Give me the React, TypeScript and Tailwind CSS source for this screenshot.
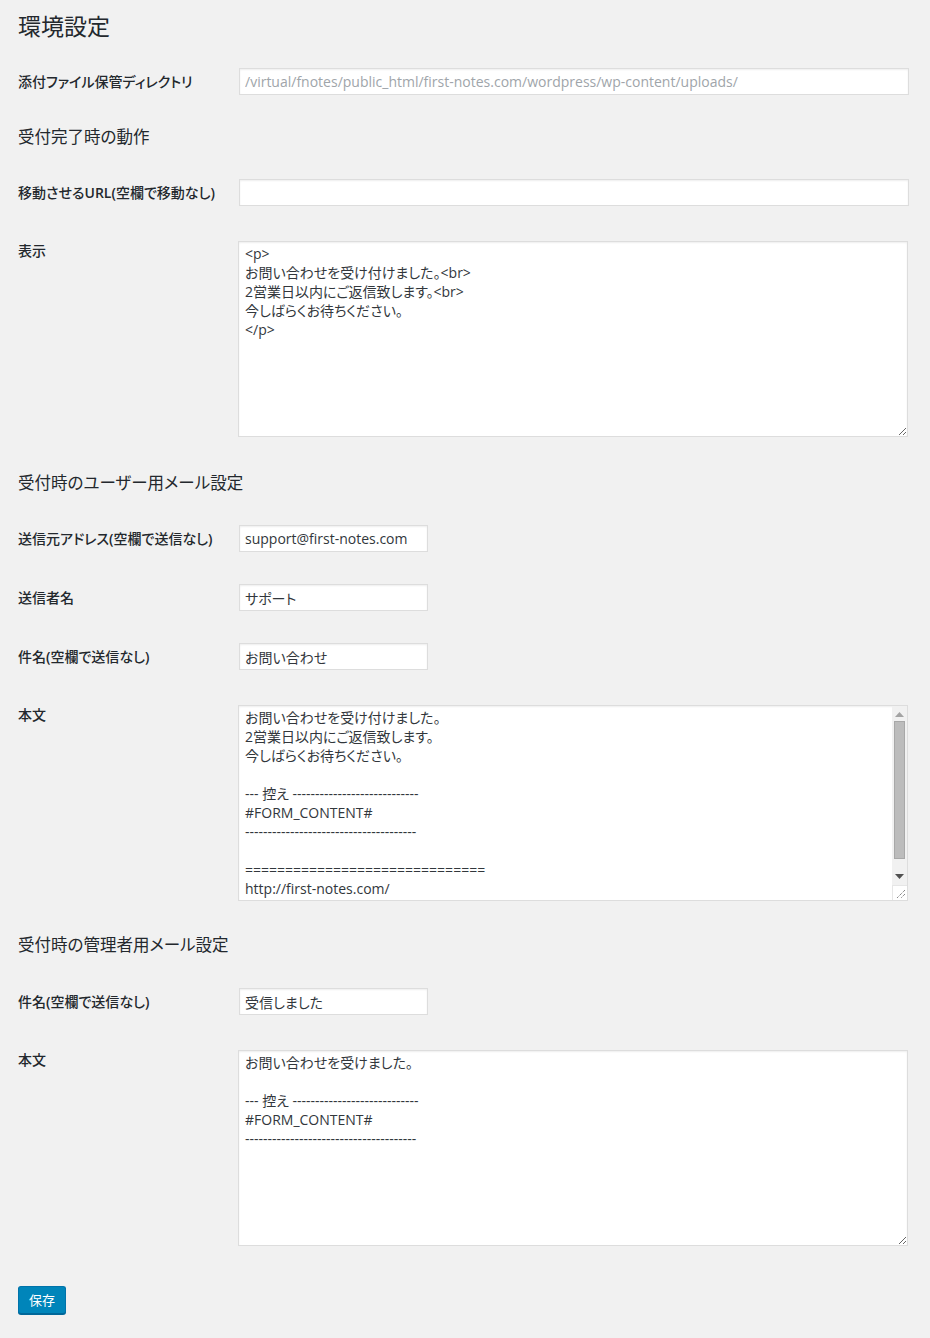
import React from "react";

const userBody = `お問い合わせを受け付けました。
2営業日以内にご返信致します。
今しばらくお待ちください。

--- 控え ----------------------------
#FORM_CONTENT#
--------------------------------------

==============================
http://first-notes.com/
==============================`;

const adminBody = `お問い合わせを受けました。

--- 控え ----------------------------
#FORM_CONTENT#
--------------------------------------`;

const displayBody = `<p>
お問い合わせを受け付けました。<br>
2営業日以内にご返信致します。<br>
今しばらくお待ちください。
</p>`;

function TextInput({ value, wide, muted }: { value: string; wide?: boolean; muted?: boolean }) {
  return (
    <input
      type="text"
      defaultValue={value}
      readOnly={muted}
      className={
        (wide ? "w-[670px] " : "w-[189px] ") +
        (muted ? "text-[#a0a5aa] " : "text-[#32373c] ") +
        "h-[27px] border border-[#dddddd] bg-white px-[5px] text-[14px] [font-feature-settings:'palt'] shadow-[inset_0_1px_2px_rgba(0,0,0,0.07)] outline-none"
      }
    />
  );
}

function Row({ label, children, top }: { label: React.ReactNode; children: React.ReactNode; top?: boolean }) {
  return (
    <div className={"flex " + (top ? "items-start" : "items-center")}>
      <div className="w-[221px] shrink-0 text-[14px] leading-[19px] font-medium text-[#23282d]">{label}</div>
      {children}
    </div>
  );
}

// latin parts of a label are semibold in the original
function B({ children }: { children: React.ReactNode }) {
  return <span className="font-semibold">{children}</span>;
}

function Area({ value }: { value: string }) {
  return (
    <textarea
      defaultValue={value}
      className="-ml-px h-[196px] w-[670px] resize border border-[#dddddd] bg-white px-[6px] pt-[2px] text-[14px] leading-[19px] text-[#32373c] [font-feature-settings:'palt'] shadow-[inset_0_1px_2px_rgba(0,0,0,0.07)] outline-none"
    />
  );
}

// textarea whose content overflows: scrollbar is drawn by hand over it
function ScrollArea({ value }: { value: string }) {
  return (
    <div className="relative -ml-px h-[196px] w-[670px]">
      <textarea
        defaultValue={value}
        className="h-full w-full resize-none overflow-hidden border border-[#dddddd] bg-white pl-[6px] pr-[20px] pt-[2px] text-[14px] leading-[19px] text-[#32373c] [font-feature-settings:'palt'] shadow-[inset_0_1px_2px_rgba(0,0,0,0.07)] outline-none"
      />
      <div className="absolute right-px top-px bottom-[16px] flex w-[15px] flex-col items-center bg-[#f1f1f1]">
        <svg width="9" height="5" viewBox="0 0 9 5" className="mt-[6px]">
          <path d="M4.5 0 L9 5 L0 5 Z" fill="#a3a3a3" />
        </svg>
        <div className="mt-[4px] h-[138px] w-[11px] border border-[#a8a8a8] bg-[#bcbcbc]" />
        <div className="flex-1" />
        <svg width="9" height="5" viewBox="0 0 9 5" className="mb-[6px]">
          <path d="M0 0 L9 0 L4.5 5 Z" fill="#505050" />
        </svg>
      </div>
      <div className="absolute right-px bottom-px h-[15px] w-[15px] border-l border-t border-[#e6e6e6] bg-white">
        <svg width="14" height="14" viewBox="0 0 14 14" className="block">
          <path d="M12 4 L4 12 M12 8 L8 12" stroke="#555" strokeWidth="1" strokeDasharray="1 1" />
        </svg>
      </div>
    </div>
  );
}

function Heading({ children, className }: { children: React.ReactNode; className: string }) {
  return <h2 className={"text-[16.5px] leading-[24px] text-[#23282d] " + className}>{children}</h2>;
}

export default function App() {
  return (
    <div className="min-h-[1338px] bg-[#f1f1f1] pl-[18px] pr-[21px] pt-[12px] pb-[20px] font-['Open_Sans','Noto_Sans_CJK_JP',sans-serif] [font-feature-settings:'palt']">
      <h1 className="text-[23px] leading-[29px] text-[#23282d]">環境設定</h1>

      <div className="mt-[27px]">
        <Row label="添付ファイル保管ディレクトリ">
          <TextInput wide muted value="/virtual/fnotes/public_html/first-notes.com/wordpress/wp-content/uploads/" />
        </Row>
      </div>

      <Heading className="mt-[30px]">受付完了時の動作</Heading>
      <div className="mt-[30px]">
        <Row label={<>移動させる<B>URL(</B>空欄で移動なし<B>)</B></>}>
          <TextInput wide value="" />
        </Row>
      </div>
      <div className="mt-[35px]">
        <Row label="表示" top>
          <Area value={displayBody} />
        </Row>
      </div>

      <Heading className="mt-[34px]">受付時のユーザー用メール設定</Heading>
      <div className="mt-[30px]">
        <Row label={<>送信元アドレス<B>(</B>空欄で送信なし<B>)</B></>}>
          <TextInput value="support@first-notes.com" />
        </Row>
      </div>
      <div className="mt-[32px]">
        <Row label="送信者名">
          <TextInput value="サポート" />
        </Row>
      </div>
      <div className="mt-[32px]">
        <Row label={<>件名<B>(</B>空欄で送信なし<B>)</B></>}>
          <TextInput value="お問い合わせ" />
        </Row>
      </div>
      <div className="mt-[35px]">
        <Row label="本文" top>
          <ScrollArea value={userBody} />
        </Row>
      </div>

      <Heading className="mt-[32px]">受付時の管理者用メール設定</Heading>
      <div className="mt-[31px]">
        <Row label={<>件名<B>(</B>空欄で送信なし<B>)</B></>}>
          <TextInput value="受信しました" />
        </Row>
      </div>
      <div className="mt-[35px]">
        <Row label="本文" top>
          <Area value={adminBody} />
        </Row>
      </div>

      <button className="mt-[40px] h-[28px] rounded-[3px] border border-[#0073aa] border-b-[#006799] bg-[#0085ba] px-[10px] text-[13px] leading-[26px] text-white shadow-[0_1px_0_#006799]">
        保存
      </button>
    </div>
  );
}
